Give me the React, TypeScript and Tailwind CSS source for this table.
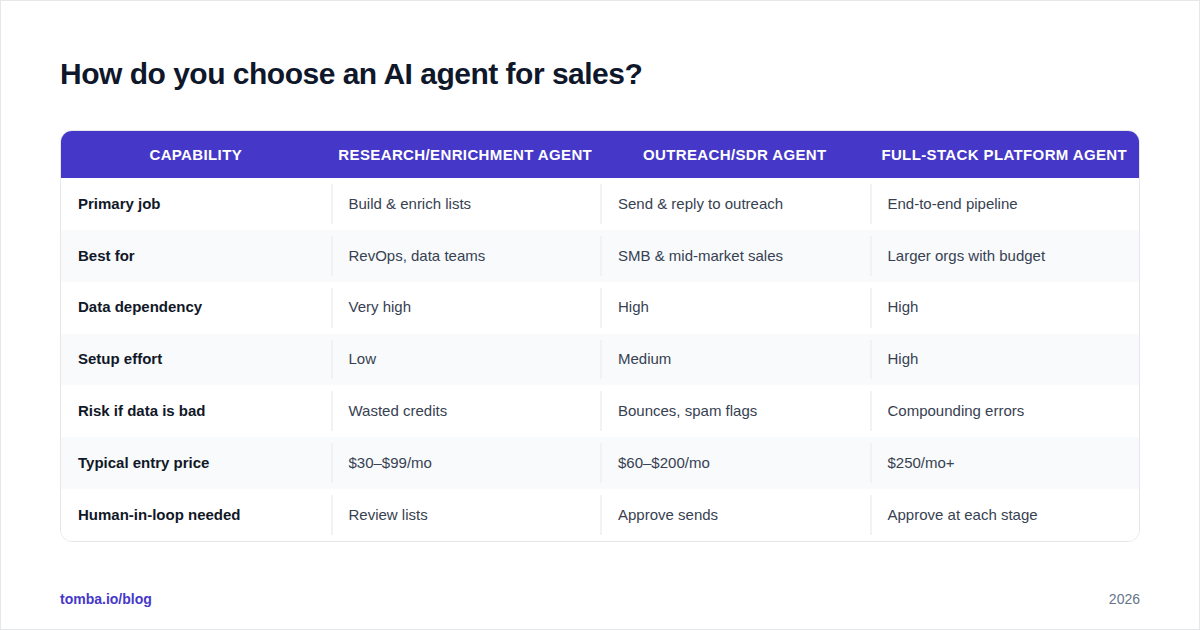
const headers = [
  "Capability",
  "Research/Enrichment Agent",
  "Outreach/SDR Agent",
  "Full-Stack Platform Agent",
];

const rows = [
  ["Primary job", "Build & enrich lists", "Send & reply to outreach", "End-to-end pipeline"],
  ["Best for", "RevOps, data teams", "SMB & mid-market sales", "Larger orgs with budget"],
  ["Data dependency", "Very high", "High", "High"],
  ["Setup effort", "Low", "Medium", "High"],
  ["Risk if data is bad", "Wasted credits", "Bounces, spam flags", "Compounding errors"],
  ["Typical entry price", "$30–$99/mo", "$60–$200/mo", "$250/mo+"],
  ["Human-in-loop needed", "Review lists", "Approve sends", "Approve at each stage"],
];

const App = () => {
  return (
    <div
      className="w-[1200px] h-[630px] bg-white border border-[#e5e7eb] flex flex-col px-[59px] pt-[55px] pb-[19px]"
      style={{ fontFamily: '"Liberation Sans", Arial, sans-serif' }}
    >
      <h1 className="text-[30px] leading-[36px] font-bold text-[#0f172a] tracking-[-0.5px]">
        How do you choose an AI agent for sales?
      </h1>

      <div className="mt-[38px] rounded-xl border border-[#e5e7eb] overflow-hidden">
        <div className="flex h-[47px] pt-[2px] bg-[#4538c9] text-white">
          {headers.map((h) => (
            <div
              key={h}
              className="w-1/4 flex items-center justify-center text-[15px] font-bold uppercase tracking-[0.025em]"
            >
              {h}
            </div>
          ))}
        </div>
        {rows.map((row, i) => (
          <div
            key={row[0]}
            className={`flex h-[51.85px] py-[6px] ${i % 2 === 1 ? "bg-[#f8fafc]" : "bg-white"}`}
          >
            {row.map((cell, j) => (
              <div
                key={j}
                className={`w-1/4 flex items-center text-[15px] ${
                  j === 0
                    ? "px-[17px] font-bold text-[#111827]"
                    : "pl-[16px] pr-[17px] border-l-2 border-[#f1f2f4] text-[#374151]"
                }`}
              >
                {cell}
              </div>
            ))}
          </div>
        ))}
      </div>

      <div className="mt-auto flex items-center justify-between text-[14px]">
        <span className="font-bold text-[#4538c9]">tomba.io/blog</span>
        <span className="text-[#64748b]">2026</span>
      </div>
    </div>
  );
};

export default App;
